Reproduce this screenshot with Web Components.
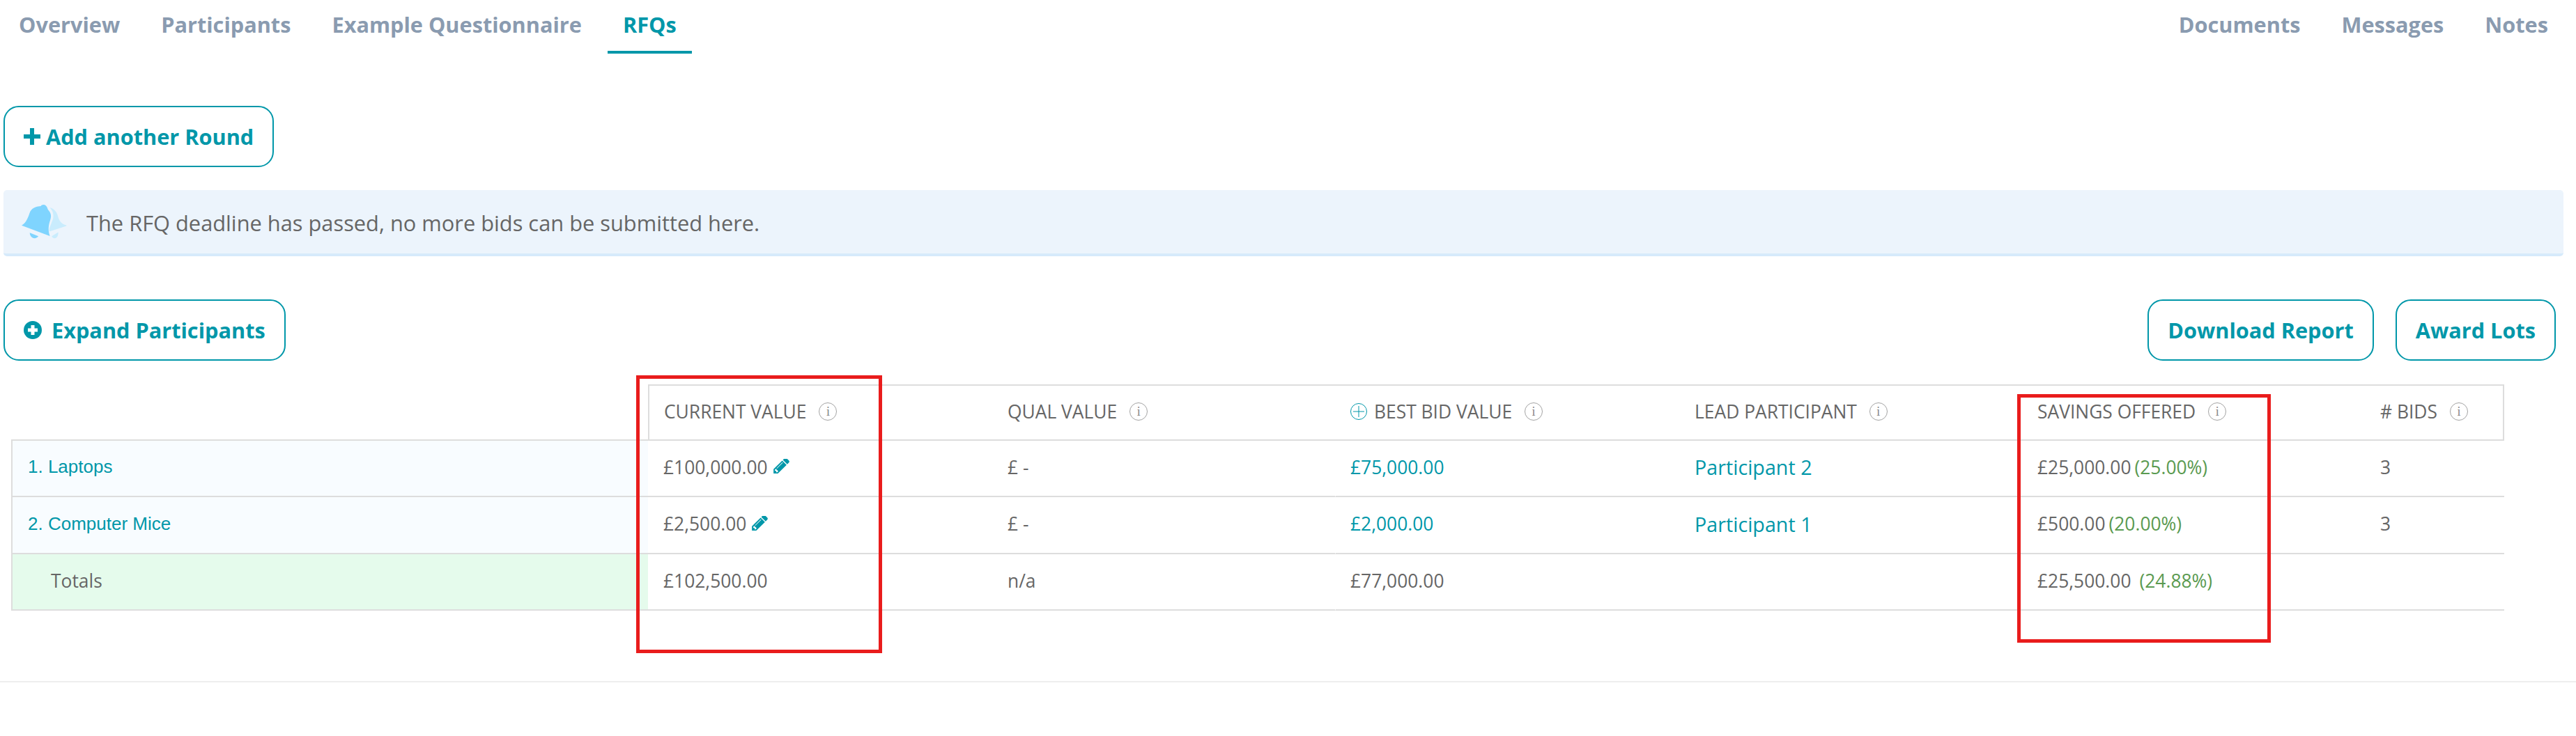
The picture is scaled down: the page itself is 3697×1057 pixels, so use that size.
<!DOCTYPE html>
<html>
<head>
<meta charset="utf-8">
<title>RFQs</title>
<style>
    html, body { margin: 0; background: #fff; }
    body { font-family: "Open Sans", sans-serif; color: #666; }
    rfq-page { width: 3697px; height: 1057px; }
</style>
</head>
<body>
<rfq-page></rfq-page>

<script>
const TEAL = "#0097a9";

class RfqTab extends HTMLElement {
    constructor() {
        super();
        this.attachShadow({mode: "open"}).innerHTML = `
        <style>
            :host {
                display: block;
                height: 73px;
                padding: 0 22px;
                border-bottom: 4px solid transparent;
                color: #8a9bb0;
                font: 700 30.700px/71px "Open Sans", sans-serif;
                white-space: nowrap;
            }
            :host([active]) {
                color: ${TEAL};
                border-bottom-color: ${TEAL};
            }
        </style>
        <slot></slot>`;
    }
}
customElements.define("rfq-tab", RfqTab);

class RfqTabs extends HTMLElement {
    constructor() {
        super();
        this.attachShadow({mode: "open"}).innerHTML = `
        <style>
            :host { display: flex; justify-content: space-between; padding: 0 18px 0 5px; }
            .group { display: flex; gap: 15px; }
        </style>
        <div class="group"><slot name="left"></slot></div>
        <div class="group"><slot name="right"></slot></div>`;
    }
}
customElements.define("rfq-tabs", RfqTabs);

class RfqButton extends HTMLElement {
    constructor() {
        super();
        this.attachShadow({mode: "open"}).innerHTML = `
        <style>
            :host {
                display: inline-flex;
                align-items: center;
                box-sizing: border-box;
                height: 88px;
                padding: 0 27px;
                border: 2px solid ${TEAL};
                border-radius: 22px;
                background: #fff;
                color: ${TEAL};
                font: 700 30.700px "Open Sans", sans-serif;
                white-space: nowrap;
            }
            svg { display: none; margin-right: 8px; }
            :host([icon="plus"]) svg.plus { display: block; }
            :host([icon="plus-circle"]) svg.circle { display: block; margin-right: 14px; }
        </style>
        <svg class="plus" width="24" height="26" viewBox="0 0 24 26"><path fill="${TEAL}" d="M9 1h6v9h9v6h-9v9H9v-9H0v-6h9z"/></svg>
        <svg class="circle" width="26" height="26" viewBox="0 0 26 26"><circle cx="13" cy="13" r="13" fill="${TEAL}"/><path fill="#fff" d="M10.5 6h5v4.500h4.500v5h-4.500V20h-5v-4.500H6v-5h4.500z"/></svg>
        <slot></slot>`;
    }
}
customElements.define("rfq-button", RfqButton);

class RfqAlert extends HTMLElement {
    constructor() {
        super();
        this.attachShadow({mode: "open"}).innerHTML = `
        <style>
            :host {
                display: flex;
                align-items: center;
                box-sizing: border-box;
                height: 95px;
                padding: 2px 0 0 25px;
                border-bottom: 4px solid #d6eafb;
                border-radius: 5px;
                background: #ecf4fc;
                color: #666;
                font: 400 30.800px "Open Sans", sans-serif;
            }
            svg { margin: -4px 27px 0 0; flex: none; }
        </style>
        <svg width="67" height="52" viewBox="90 95 200 155">
            <path fill="#7fd4fe" d="M93 190C115 178 122 150 130 130C140 112 160 108 175 107C178 100 192 98 198 106C204 112 204 118 206 122C218 135 222 148 216 165C210 185 204 205 214 235Z"/>
            <path fill="#7fd4fe" d="M128 221L165 236C155 250 130 248 128 221Z"/>
            <path fill="#c9ecfd" d="M213 113C235 118 245 135 250 155C256 175 270 185 285 189L285 192L212 216C208 205 222 180 228 160C232 140 225 125 213 113Z"/>
            <path fill="#c9ecfd" d="M250 219L222 236C228 250 250 250 250 219Z"/>
        </svg>
        <slot></slot>`;
    }
}
customElements.define("rfq-alert", RfqAlert);

class RfqInfo extends HTMLElement {
    constructor() {
        super();
        this.attachShadow({mode: "open"}).innerHTML = `
        <style>
            :host {
                display: inline-flex;
                align-items: center;
                justify-content: center;
                box-sizing: border-box;
                width: 26px;
                height: 26px;
                margin-left: 18px;
                border: 1px solid #a3a3a3;
                border-radius: 50%;
                color: #888;
                font: 400 18px/1 "Liberation Serif", serif;
            }
        </style>i`;
    }
}
customElements.define("rfq-info", RfqInfo);

class RfqTable extends HTMLElement {
    constructor() {
        super();
        this.shadowDOM = this.attachShadow({mode: "open"});
    }

    connectedCallback() {
        this.render();
    }

    get pencil() {
        return `<svg class="pencil" width="23" height="23" viewBox="0 0 1515 1536"><path fill="${TEAL}" d="M363 1280l91-91-235-235-91 91v107h128v128h107zm523-928q0-22-22-22-10 0-17 7L305 889q-7 7-7 17 0 22 22 22 10 0 17-7l542-542q7-7 7-17zm-54-192l416 416-832 832H0v-416zm683 96q0 53-37 90l-166 166-416-416 166-165q36-38 90-38 53 0 91 38l235 234q37 39 37 91z"/></svg>`;
    }

    head(text, extra = "") {
        return `<div class="th ${extra}"><span>${text}</span><rfq-info></rfq-info></div>`;
    }

    row(label, current, qual, best, lead, saving, pct, bids) {
        return `
            <div class="label">${label}</div>
            <div class="td cur">${current}${this.pencil}</div>
            <div class="td">${qual}</div>
            <div class="td gap link">${best}</div>
            <div class="td lead">${lead}</div>
            <div class="td">${saving}<span class="pct">${pct}</span></div>
            <div class="td">${bids}</div>`;
    }

    render() {
        this.shadowDOM.innerHTML = `
        <style>
            :host {
                display: block;
                position: relative;
                margin-left: 16px;
                width: 3578px;
            }
            .grid {
                display: grid;
                grid-template-columns: 914px 492px 494px 492px 492px 492px 202px;
                grid-template-rows: 81px 81px 82px 81px;
                font: 400 26.400px "Open Sans", sans-serif;
                color: #666;
            }
            .grid > div {
                display: flex;
                align-items: center;
                box-sizing: border-box;
                padding-bottom: 4px;
                border-bottom: 2px solid #ddd;
                white-space: nowrap;
            }
            .th {
                border-top: 2px solid #ddd;
                padding-left: 24px;
            }
            .th.first { border-left: 2px solid #ddd; padding-left: 21px; }
            .th.last { border-right: 2px solid #ddd; }
            .plus { margin-right: 10px; flex: none; }
            .td { padding-left: 24px; }
            .td.cur, .td.tot { padding-left: 22px; }
            .gap { border-left: 1px solid #fff; padding-left: 21px; }
            .th.best { padding-left: 22px; }
            .label {
                padding-left: 22px;
                border-left: 2px solid #ddd;
                background: #f8fcff;
                color: ${TEAL};
                font: 400 26px "Liberation Sans", sans-serif;
            }
            .grid > .label.total {
                padding-left: 55px;
                background: #e5fbec;
                color: #666;
                font: 400 26.400px "Open Sans", sans-serif;
            }
            .link, .lead { color: ${TEAL}; }
            .lead { font-size: 28.700px; }
            .pencil { margin-left: 8px; flex: none; }
            .pct { margin-left: 5px; color: #5a9a50; }
            .pct.wide { margin-left: 12px; }
            .mark {
                position: absolute;
                box-sizing: border-box;
                border: 5px solid #e91c1c;
                pointer-events: none;
            }
            .mark.current { left: 897px; top: -13px; width: 353px; height: 399px; }
            .mark.savings { left: 2879px; top: 14px; width: 364px; height: 357px; }
        </style>
        <div class="grid">
            <div></div>
            ${this.head("CURRENT VALUE", "first")}
            ${this.head("QUAL VALUE")}
            <div class="th best"><svg class="plus" width="24" height="24" viewBox="0 0 24 24"><circle cx="12" cy="12" r="11.500" fill="none" stroke="${TEAL}"/><path stroke="${TEAL}" d="M12 4v16M4 12h16"/></svg><span>BEST BID VALUE</span><rfq-info></rfq-info></div>
            ${this.head("LEAD PARTICIPANT")}
            ${this.head("SAVINGS OFFERED")}
            ${this.head("# BIDS", "last")}
            ${this.row("1. Laptops", "£100,000.00", "£ -", "£75,000.00", "Participant 2", "£25,000.00", "(25.00%)", "3")}
            ${this.row("2. Computer Mice", "£2,500.00", "£ -", "£2,000.00", "Participant 1", "£500.00", "(20.00%)", "3")}
            <div class="label total">Totals</div>
            <div class="td tot">£102,500.00</div>
            <div class="td">n/a</div>
            <div class="td gap">£77,000.00</div>
            <div class="td"></div>
            <div class="td">£25,500.00<span class="pct wide">(24.88%)</span></div>
            <div class="td"></div>
        </div>
        <div class="mark current"></div>
        <div class="mark savings"></div>`;
    }
}
customElements.define("rfq-table", RfqTable);

class RfqPage extends HTMLElement {
    constructor() {
        super();
        this.attachShadow({mode: "open"}).innerHTML = `
        <style>
            :host { display: block; overflow: hidden; }
            .body { padding: 75px 18px 0 5px; }
            .row { display: flex; justify-content: space-between; margin-top: 62px; }
            .actions { display: flex; gap: 31px; margin-right: 11px; }
            rfq-alert { margin-top: 33px; }
            rfq-table { margin: 34px 0 0 11px; }
            hr { margin: 101px 0 0; border: 0; border-top: 2px solid #eee; }
        </style>
        <rfq-tabs>
            <rfq-tab slot="left">Overview</rfq-tab>
            <rfq-tab slot="left">Participants</rfq-tab>
            <rfq-tab slot="left">Example Questionnaire</rfq-tab>
            <rfq-tab slot="left" active>RFQs</rfq-tab>
            <rfq-tab slot="right">Documents</rfq-tab>
            <rfq-tab slot="right">Messages</rfq-tab>
            <rfq-tab slot="right">Notes</rfq-tab>
        </rfq-tabs>
        <div class="body">
            <rfq-button icon="plus">Add another Round</rfq-button>
            <rfq-alert>The RFQ deadline has passed, no more bids can be submitted here.</rfq-alert>
            <div class="row">
                <rfq-button icon="plus-circle">Expand Participants</rfq-button>
                <div class="actions">
                    <rfq-button>Download Report</rfq-button>
                    <rfq-button>Award Lots</rfq-button>
                </div>
            </div>
            <rfq-table></rfq-table>
        </div>
        <hr>`;
    }
}
customElements.define("rfq-page", RfqPage);
</script>
</body>
</html>
